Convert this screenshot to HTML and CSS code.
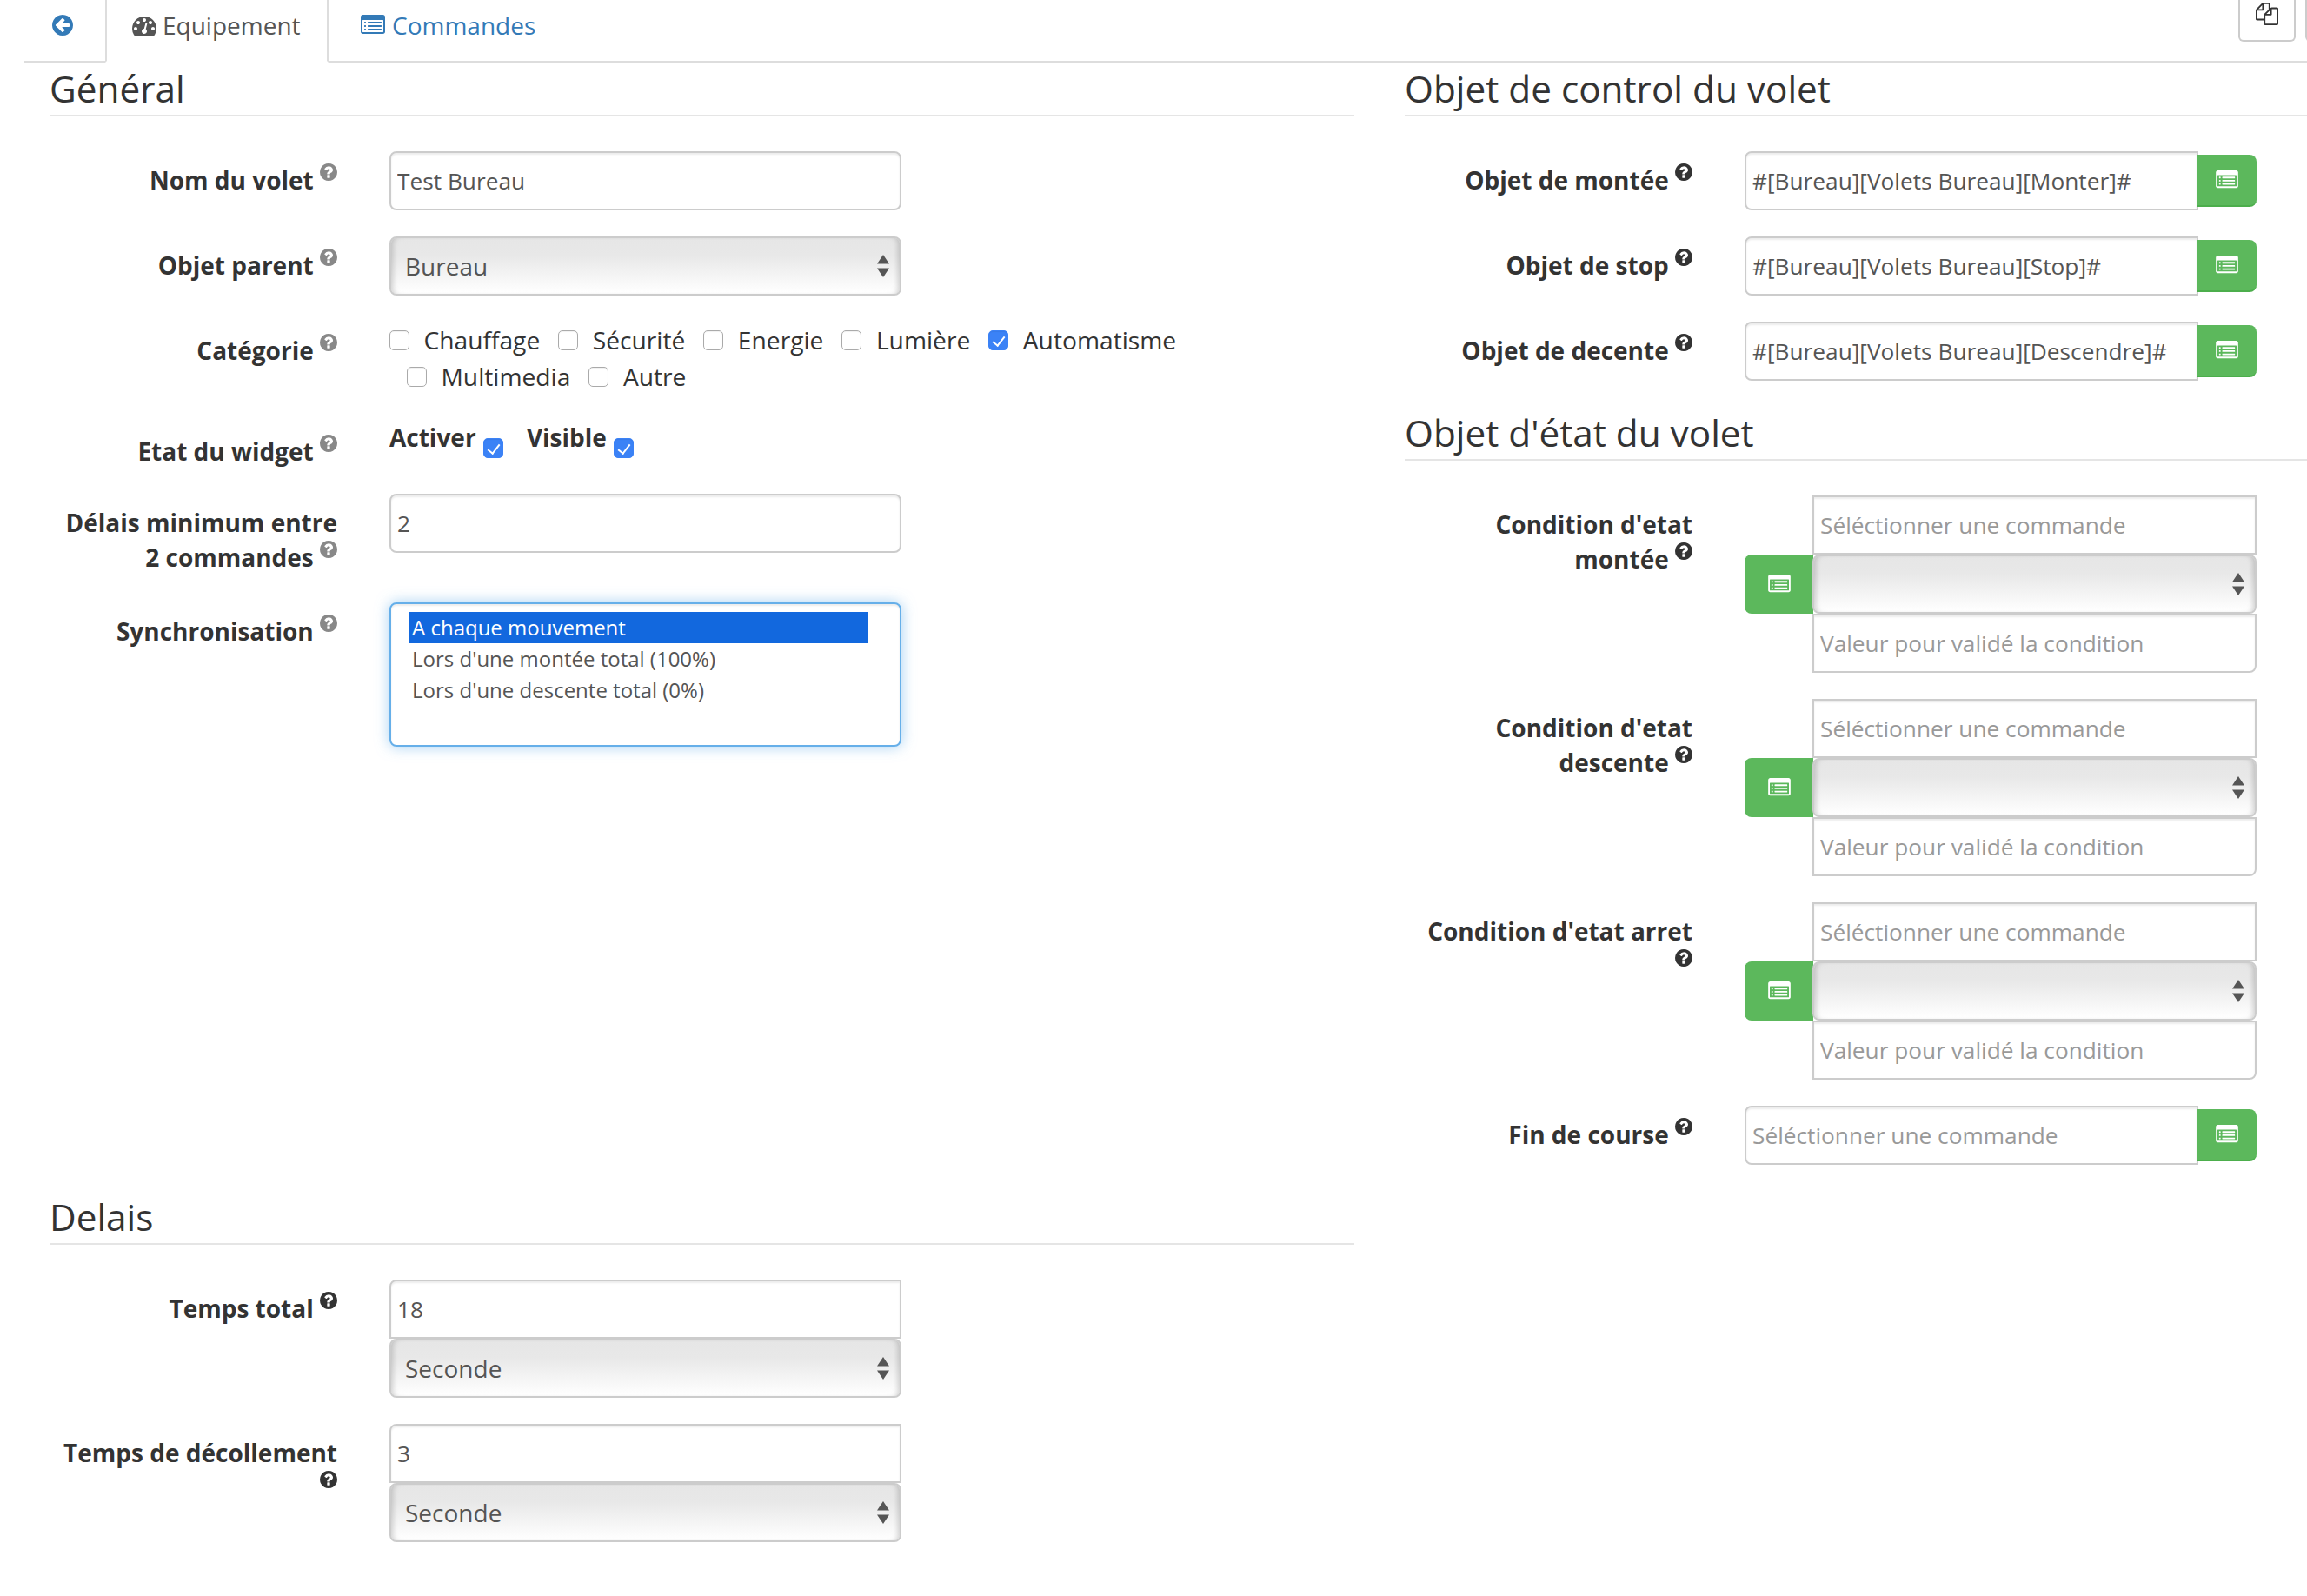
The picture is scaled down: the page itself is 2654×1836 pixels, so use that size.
FILE: index.html
```html
<!DOCTYPE html>
<html lang="fr">
<head>
  <meta charset="UTF-8" />
  <title>Volet - Equipement</title>
  <link rel="stylesheet" href="styles.css">
</head>
<body>
  <svg class="icon-defs" width="0" height="0">
    <symbol id="i-help" viewBox="128 128 1536 1536"><path d="M1024 1376v-192q0-14-9-23t-23-9h-192q-14 0-23 9t-9 23v192q0 14 9 23t23 9h192q14 0 23-9t9-23zm256-672q0-88-55.5-163t-138.5-116-170-41q-243 0-371 213-15 24 8 42l132 100q7 6 19 6 16 0 25-12 53-68 86-92 34-24 86-24 48 0 85.5 26t37.5 59q0 38-20 61t-68 45q-63 28-115.5 86.5t-52.5 125.5v36q0 14 9 23t23 9h192q14 0 23-9t9-23q0-19 21.5-49.5t54.5-49.5q32-18 49-28.5t46-35 44.5-48 28-60.5 12.5-81zm384 192q0 209-103 385.5t-279.5 279.5-385.5 103-385.5-103-279.5-279.5-103-385.5 103-385.5 279.5-279.5 385.5-103 385.5 103 279.5 279.5 103 385.5z"/></symbol>
    <symbol id="i-back" viewBox="128 128 1536 1536"><path d="M1408 960v-128q0-26-19-45t-45-19h-502l189-189q19-19 19-45t-19-45l-91-91q-18-18-45-18t-45 18l-362 362-91 91q-18 18-18 45t18 45l91 91 362 362q18 18 45 18t45-18l91-91q18-18 18-45t-18-45l-189-189h502q26 0 45-19t19-45zm256-64q0 209-103 385.5t-279.5 279.5-385.5 103-385.5-103-279.5-279.5-103-385.5 103-385.5 279.5-279.5 385.5-103 385.5 103 279.5 279.5 103 385.5z"/></symbol>
    <symbol id="i-list" viewBox="0 128 1792 1536"><path d="M384 1184v64q0 13-9.5 22.5t-22.5 9.5h-64q-13 0-22.5-9.5t-9.5-22.5v-64q0-13 9.5-22.5t22.5-9.5h64q13 0 22.5 9.5t9.5 22.5zm0-256v64q0 13-9.5 22.5t-22.5 9.5h-64q-13 0-22.5-9.5t-9.5-22.5v-64q0-13 9.5-22.5t22.5-9.5h64q13 0 22.5 9.5t9.5 22.5zm0-256v64q0 13-9.5 22.5t-22.5 9.5h-64q-13 0-22.5-9.5t-9.5-22.5v-64q0-13 9.5-22.5t22.5-9.5h64q13 0 22.5 9.5t9.5 22.5zm1152 512v64q0 13-9.5 22.5t-22.5 9.5h-960q-13 0-22.5-9.5t-9.5-22.5v-64q0-13 9.5-22.5t22.5-9.5h960q13 0 22.5 9.5t9.5 22.5zm0-256v64q0 13-9.5 22.5t-22.5 9.5h-960q-13 0-22.5-9.5t-9.5-22.5v-64q0-13 9.5-22.5t22.5-9.5h960q13 0 22.5 9.5t9.5 22.5zm0-256v64q0 13-9.5 22.5t-22.5 9.5h-960q-13 0-22.5-9.5t-9.5-22.5v-64q0-13 9.5-22.5t22.5-9.5h960q13 0 22.5 9.5t9.5 22.5zm128 704v-832q0-13-9.5-22.5t-22.5-9.5h-1472q-13 0-22.5 9.5t-9.5 22.5v832q0 13 9.5 22.5t22.5 9.5h1472q13 0 22.5-9.5t9.5-22.5zm128-1088v1088q0 66-47 113t-113 47h-1472q-66 0-113-47t-47-113v-1088q0-66 47-113t113-47h1472q66 0 113 47t47 113z"/></symbol>
    <symbol id="i-gauge" viewBox="0 128 1792 1536"><path d="M384 1152q0-53-37.5-90.5t-90.5-37.5-90.5 37.5-37.5 90.5 37.5 90.5 90.5 37.5 90.5-37.5 37.5-90.5zm192-448q0-53-37.5-90.5t-90.5-37.5-90.5 37.5-37.5 90.5 37.5 90.5 90.5 37.5 90.5-37.5 37.5-90.5zm428 481l101-382q6-26-7.5-48.5t-38.5-29.5-48 6.5-30 39.5l-101 382q-60 5-107 43.5t-63 98.5q-20 77 20 146t117 89 146-20 89-117q16-60-6-117t-72-91zm660-33q0-53-37.5-90.5t-90.5-37.5-90.5 37.5-37.5 90.5 37.5 90.5 90.5 37.5 90.5-37.5 37.5-90.5zm-640-640q0-53-37.5-90.5t-90.5-37.5-90.5 37.5-37.5 90.5 37.5 90.5 90.5 37.5 90.5-37.5 37.5-90.5zm448 192q0-53-37.5-90.5t-90.5-37.5-90.5 37.5-37.5 90.5 37.5 90.5 90.5 37.5 90.5-37.5 37.5-90.5zm320 448q0 261-141 483-19 29-54 29h-1402q-35 0-54-29-141-221-141-483 0-182 71-348t191-286 286-191 348-71 348 71 286 191 191 286 71 348z"/></symbol>
    <symbol id="i-files" viewBox="0 0 1792 1792"><path d="M1696 384q40 0 68 28t28 68v1216q0 40-28 68t-68 28h-960q-40 0-68-28t-28-68v-288h-544q-40 0-68-28t-28-68v-672q0-40 20-88t48-76l408-408q28-28 76-48t88-20h416q40 0 68 28t28 68v328q68-40 128-40h416zm-544 213l-299 299h299v-299zm-640-384l-299 299h299v-299zm196 647l316-316v-416h-384v416q0 40-28 68t-68 28h-416v640h512v-256q0-40 20-88t48-76zm956 804v-1152h-384v416q0 40-28 68t-68 28h-416v640h896z"/></symbol>
    <symbol id="i-updown" viewBox="0 0 14 26"><path d="M7 0l7 10.500H0zM7 26L0 15.500h14z"/></symbol>
  </svg>

  <div class="topbar">
    <ul class="tabs">
      <li class="tab tab-back"><a href="#"><svg class="ico ico-back"><use href="#i-back"/></svg></a></li>
      <li class="tab active"><a href="#"><svg class="ico ico-tab"><use href="#i-gauge"/></svg> Equipement</a></li>
      <li class="tab tab-cmd"><a href="#"><svg class="ico ico-tab"><use href="#i-list"/></svg> Commandes</a></li>
    </ul>
    <div class="top-actions">
      <button class="btn-copy" type="button"><svg class="ico ico-files"><use href="#i-files"/></svg></button>
      <button class="btn-copy" type="button"></button>
    </div>
  </div>

  <div class="columns">
    <section class="col">
      <h2 class="legend">Général</h2>

      <div class="form-row">
        <label class="lbl">Nom du volet <svg class="help soft"><use href="#i-help"/></svg></label>
        <div class="field"><input class="input" type="text" value="Test Bureau"></div>
      </div>

      <div class="form-row">
        <label class="lbl">Objet parent <svg class="help soft"><use href="#i-help"/></svg></label>
        <div class="field">
          <div class="select-wrap">
            <select class="input select"><option>Bureau</option></select>
            <svg class="updown"><use href="#i-updown"/></svg>
          </div>
        </div>
      </div>

      <div class="form-row row-cats">
        <label class="lbl">Catégorie <svg class="help soft"><use href="#i-help"/></svg></label>
        <div class="field cats">
          <label class="cat"><input type="checkbox" class="chk">Chauffage</label>
          <label class="cat"><input type="checkbox" class="chk">Sécurité</label>
          <label class="cat"><input type="checkbox" class="chk">Energie</label>
          <label class="cat"><input type="checkbox" class="chk">Lumière</label>
          <label class="cat"><input type="checkbox" class="chk" checked>Automatisme</label>
          <label class="cat"><input type="checkbox" class="chk">Multimedia</label>
          <label class="cat"><input type="checkbox" class="chk">Autre</label>
        </div>
      </div>

      <div class="form-row row-state">
        <label class="lbl">Etat du widget <svg class="help soft"><use href="#i-help"/></svg></label>
        <div class="field states">
          <label class="state">Activer <input type="checkbox" class="chk" checked></label>
          <label class="state">Visible <input type="checkbox" class="chk" checked></label>
        </div>
      </div>

      <div class="form-row row-delay">
        <label class="lbl">Délais minimum entre 2 commandes <svg class="help soft"><use href="#i-help"/></svg></label>
        <div class="field"><input class="input" type="text" value="2"></div>
      </div>

      <div class="form-row">
        <label class="lbl">Synchronisation <svg class="help soft"><use href="#i-help"/></svg></label>
        <div class="field">
          <select class="listbox" multiple size="4">
            <option selected>A chaque mouvement</option>
            <option>Lors d'une montée total (100%)</option>
            <option>Lors d'une descente total (0%)</option>
          </select>
        </div>
      </div>
    </section>

    <section class="col col-right">
      <h2 class="legend">Objet de control du volet</h2>

      <div class="form-row">
        <label class="lbl">Objet de montée <svg class="help"><use href="#i-help"/></svg></label>
        <div class="field input-group">
          <input class="input ig-input" type="text" value="#[Bureau][Volets Bureau][Monter]#">
          <button class="btn-green ig-after" type="button"><svg class="ico ico-btn"><use href="#i-list"/></svg></button>
        </div>
      </div>

      <div class="form-row">
        <label class="lbl">Objet de stop <svg class="help"><use href="#i-help"/></svg></label>
        <div class="field input-group">
          <input class="input ig-input" type="text" value="#[Bureau][Volets Bureau][Stop]#">
          <button class="btn-green ig-after" type="button"><svg class="ico ico-btn"><use href="#i-list"/></svg></button>
        </div>
      </div>

      <div class="form-row">
        <label class="lbl">Objet de decente <svg class="help"><use href="#i-help"/></svg></label>
        <div class="field input-group">
          <input class="input ig-input" type="text" value="#[Bureau][Volets Bureau][Descendre]#">
          <button class="btn-green ig-after" type="button"><svg class="ico ico-btn"><use href="#i-list"/></svg></button>
        </div>
      </div>

      <h2 class="legend">Objet d'état du volet</h2>

      <div class="form-row">
        <label class="lbl">Condition d'etat montée <svg class="help"><use href="#i-help"/></svg></label>
        <div class="field cond">
          <button class="btn-green ig-before" type="button"><svg class="ico ico-btn"><use href="#i-list"/></svg></button>
          <div class="cond-stack">
            <input class="input square" type="text" placeholder="Séléctionner une commande">
            <div class="select-wrap">
              <select class="input select"><option></option></select>
              <svg class="updown"><use href="#i-updown"/></svg>
            </div>
            <input class="input bottom" type="text" placeholder="Valeur pour validé la condition">
          </div>
        </div>
      </div>

      <div class="form-row">
        <label class="lbl">Condition d'etat descente <svg class="help"><use href="#i-help"/></svg></label>
        <div class="field cond">
          <button class="btn-green ig-before" type="button"><svg class="ico ico-btn"><use href="#i-list"/></svg></button>
          <div class="cond-stack">
            <input class="input square" type="text" placeholder="Séléctionner une commande">
            <div class="select-wrap">
              <select class="input select"><option></option></select>
              <svg class="updown"><use href="#i-updown"/></svg>
            </div>
            <input class="input bottom" type="text" placeholder="Valeur pour validé la condition">
          </div>
        </div>
      </div>

      <div class="form-row">
        <label class="lbl">Condition d'etat arret <svg class="help"><use href="#i-help"/></svg></label>
        <div class="field cond">
          <button class="btn-green ig-before" type="button"><svg class="ico ico-btn"><use href="#i-list"/></svg></button>
          <div class="cond-stack">
            <input class="input square" type="text" placeholder="Séléctionner une commande">
            <div class="select-wrap">
              <select class="input select"><option></option></select>
              <svg class="updown"><use href="#i-updown"/></svg>
            </div>
            <input class="input bottom" type="text" placeholder="Valeur pour validé la condition">
          </div>
        </div>
      </div>

      <div class="form-row">
        <label class="lbl">Fin de course <svg class="help"><use href="#i-help"/></svg></label>
        <div class="field input-group">
          <input class="input ig-input" type="text" placeholder="Séléctionner une commande">
          <button class="btn-green ig-after" type="button"><svg class="ico ico-btn"><use href="#i-list"/></svg></button>
        </div>
      </div>
    </section>

    <section class="col">
      <h2 class="legend">Delais</h2>

      <div class="form-row">
        <label class="lbl">Temps total <svg class="help"><use href="#i-help"/></svg></label>
        <div class="field stack">
          <input class="input top" type="text" value="18">
          <div class="select-wrap">
            <select class="input select"><option>Seconde</option></select>
            <svg class="updown"><use href="#i-updown"/></svg>
          </div>
        </div>
      </div>

      <div class="form-row">
        <label class="lbl">Temps de décollement <svg class="help"><use href="#i-help"/></svg></label>
        <div class="field stack">
          <input class="input top" type="text" value="3">
          <div class="select-wrap">
            <select class="input select"><option>Seconde</option></select>
            <svg class="updown"><use href="#i-updown"/></svg>
          </div>
        </div>
      </div>
    </section>
  </div>
</body>
</html>
```

FILE: styles.css
```css
* {
  box-sizing: border-box;
}

body {
  margin: 0;
  font-family: "Open Sans", sans-serif;
  font-size: 28px;
  line-height: 40px;
  color: #333;
  background: #fff;
  overflow: hidden;
}

.icon-defs {
  position: absolute;
}

.ico {
  fill: currentColor;
}

/* tabs */
.topbar {
  height: 72px;
  margin-left: 28px;
  border-bottom: 2px solid #ddd;
  display: flex;
  justify-content: space-between;
}

.tabs {
  display: flex;
  list-style: none;
  margin: 0;
  padding: 0;
  height: 72px;
}

.tab a {
  display: flex;
  align-items: center;
  gap: 8px;
  height: 68px;
  padding: 0 30px 10px;
  color: #337ab7;
  text-decoration: none;
}

.tab-back a {
  padding: 0 37px 10px 32px;
  width: 93px;
}

.tab.active {
  width: 257px;
  height: 72px;
  background: #fff;
  border: 2px solid #ddd;
  border-top: 0;
  border-bottom-color: #fff;
}

.tab.active a {
  color: #555;
  padding-left: 29px;
  gap: 7px;
}

.tab-cmd a {
  padding-left: 37px;
}

.ico-back {
  width: 24px;
  height: 24px;
}

.ico-tab {
  width: 28px;
  height: 24px;
  flex: none;
}

.top-actions {
  display: flex;
  gap: 11px;
  margin-right: -64px;
}

.btn-copy {
  width: 66px;
  height: 48px;
  padding: 0 0 12px;
  color: #333;
  background: #fff;
  border: 2px solid #ccc;
  border-top: 0;
  border-radius: 0 0 6px 6px;
}

.ico-files {
  width: 26px;
  height: 26px;
}

/* columns */
.columns {
  display: grid;
  grid-template-columns: 1501px 1038px;
  column-gap: 58px;
  padding-left: 57px;
}

.legend {
  height: 62px;
  margin: 0 0 40px;
  font-size: 42.3px;
  line-height: 60px;
  font-weight: 400;
  color: #333;
  border-bottom: 2px solid #e5e5e5;
}

.form-row {
  display: flex;
  margin-bottom: 30px;
}

.lbl {
  width: 331px;
  padding-top: 13px;
  text-align: right;
  font-weight: 700;
  flex: none;
}

.help {
  display: inline-block;
  width: 20px;
  height: 20px;
  vertical-align: 10px;
  fill: #333;
}

.help.soft {
  fill: #888;
}

.field {
  width: 589px;
  margin-left: 60px;
  flex: none;
}

/* inputs */
.input {
  display: block;
  width: 100%;
  height: 68px;
  padding: 0 7px;
  font: inherit;
  font-size: 26.25px;
  color: #555;
  background: #fff;
  border: 2px solid #ccc;
  border-radius: 8px;
  box-shadow: inset 0 2px 2px rgba(0, 0, 0, 0.075);
  outline: none;
}

.input::placeholder {
  color: #999;
  opacity: 1;
}

.select {
  padding-left: 16px;
  font-size: 28px;
  appearance: none;
  background: linear-gradient(#e6e6e6, #e8e8e8 30%, #fff);
  box-shadow: inset 6px 0 6px -4px rgba(0, 0, 0, 0.18), inset -6px 0 6px -4px rgba(0, 0, 0, 0.18);
}

.select-wrap {
  position: relative;
}

.updown {
  position: absolute;
  right: 14px;
  top: 21px;
  width: 14px;
  height: 26px;
  fill: #555;
}

.input.square {
  border-radius: 0;
}

.input.bottom {
  border-radius: 0 0 8px 0;
}

.input.top {
  border-radius: 8px 0 0 0;
}

/* input + bouton vert */
.input-group {
  display: flex;
  align-items: center;
}

.ig-input {
  width: 522px;
  border-radius: 8px 0 0 8px;
}

.btn-green {
  display: flex;
  align-items: center;
  justify-content: center;
  padding: 0;
  color: #fff;
  background: #5cb85c;
  border: 0;
  border-bottom: 2px solid #4cae4c;
  flex: none;
}

.ig-after {
  width: 68px;
  height: 60px;
  margin-left: -1px;
  border-radius: 0 8px 8px 0;
}

.ico-btn {
  width: 28px;
  height: 22px;
}

.cond {
  display: flex;
  align-items: center;
}

.ig-before {
  width: 79px;
  height: 68px;
  border-radius: 8px 0 0 8px;
  border-bottom: 0;
}

.cond-stack {
  width: 511px;
  margin-left: -1px;
  flex: none;
}

/* categories */
.row-cats {
  margin-bottom: 32px;
}

.cats {
  width: 1050px;
  display: flex;
  flex-wrap: wrap;
  font-size: 28.2px;
  line-height: 42px;
  color: #333;
}

.cat {
  display: flex;
  align-items: center;
  margin-left: 20px;
  padding-right: 1px;
}

.cat:first-child {
  margin-left: 0;
}

.cat .chk {
  margin-right: 16.5px;
}

.chk {
  appearance: none;
  position: relative;
  width: 23px;
  height: 23px;
  margin: 0;
  flex: none;
  background: #fff;
  border: 1px solid #aaa;
  border-radius: 5px;
  box-shadow: inset 0 1px 1px rgba(0, 0, 0, 0.06);
}

.chk:checked {
  background: #3b82f6;
  border-color: #3b82f6;
}

.chk:checked::after {
  content: "";
  position: absolute;
  left: 7px;
  top: 3px;
  width: 6px;
  height: 12px;
  border-right: 2px solid #fff;
  border-bottom: 2px solid #fff;
  transform: rotate(38deg);
}

/* etat */
.row-state {
  margin-bottom: 29px;
}

.row-delay {
  margin-bottom: 32px;
}

.states {
  display: flex;
  gap: 27px;
  font-weight: 700;
  line-height: 40px;
  margin-top: -3px;
}

.state .chk {
  vertical-align: -13px;
  margin-left: 1px;
}

/* liste multiple */
.listbox {
  display: block;
  width: 100%;
  height: 166px;
  padding: 9px 36px 10px 21px;
  font-family: inherit;
  font-size: 24px;
  color: #555;
  background: #fff;
  border: 2px solid #66afe9;
  border-radius: 8px;
  box-shadow: inset 0 2px 2px rgba(0, 0, 0, 0.075), 0 0 16px rgba(102, 175, 233, 0.6);
  outline: none;
  overflow: hidden;
  scrollbar-width: none;
}

.listbox option {
  height: 36px;
  padding: 1px 3px 3px;
  line-height: 32px;
}

.listbox option:checked {
  color: #fff;
  background: linear-gradient(#1268de, #1268de);
}
```
